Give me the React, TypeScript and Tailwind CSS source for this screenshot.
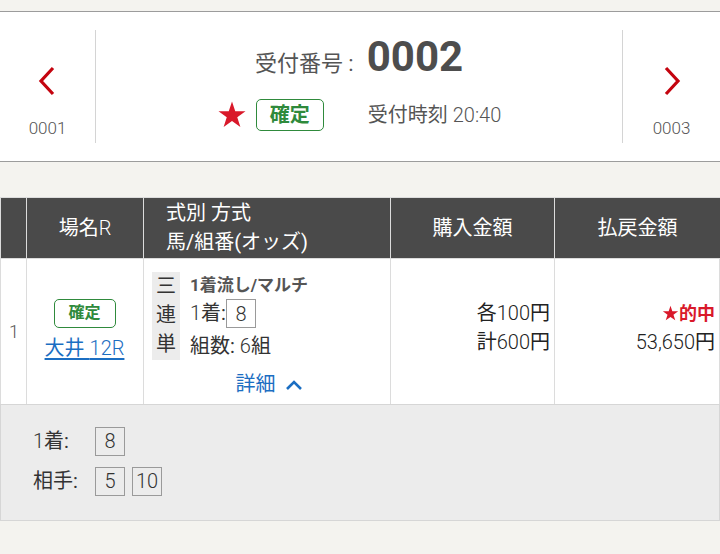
import React from "react";

const font = { fontFamily: 'Roboto, "Noto Sans CJK JP", sans-serif' };

function Chevron({ dir }: { dir: "left" | "right" }) {
  return (
    <svg width="18" height="30" viewBox="0 0 18 30" fill="none">
      {dir === "left" ? (
        <path d="M15 2 L3 15 L15 28" stroke="#c4040f" strokeWidth="3.2" />
      ) : (
        <path d="M3 2 L15 15 L3 28" stroke="#c4040f" strokeWidth="3.2" />
      )}
    </svg>
  );
}

function Star({ size }: { size: number }) {
  return (
    <svg width={size} height={size} viewBox="0 0 24 24">
      <path
        d="M12 1.2 L14.6 8.9 L22.8 8.9 L16.2 13.8 L18.7 21.6 L12 16.8 L5.3 21.6 L7.8 13.8 L1.2 8.9 L9.4 8.9 Z"
        fill="#d9192a"
      />
    </svg>
  );
}

function Box({ children }: { children: React.ReactNode }) {
  return (
    <span className="inline-flex h-[29px] w-[30px] items-center justify-center border border-[#9a9a9a] text-[20px] font-light leading-none text-[#333]">
      {children}
    </span>
  );
}

export default function App() {
  return (
    <div className="min-h-[554px] w-[720px] bg-[#f4f3ef] pt-[11px] font-light" style={font}>
      {/* Header panel */}
      <div className="flex h-[151px] border-y border-[#9c9c9c] bg-white py-[18px]">
        <div className="flex w-[96px] flex-col items-center border-r border-[#d4d4d4] pt-[36px]">
          <div className="ml-[-2px]">
            <Chevron dir="left" />
          </div>
          <div className="mt-[24px] text-[17px] leading-none text-[#555]">0001</div>
        </div>
        <div className="flex flex-1 flex-col items-center">
          <div className="mt-[1px] flex items-baseline text-[#555]">
            <span className="text-[22px] font-normal">受付番号 :</span>
            <span className="ml-[13px] text-[42px] font-bold leading-[52px] text-[#4d4d4d]">0002</span>
          </div>
          <div className="mt-[16px] flex items-center">
            <span>
              <Star size={30} />
            </span>
            <span className="ml-[9px] flex h-[32px] w-[68px] items-center justify-center rounded-[5px] border border-[#2f8a3c] text-[20px] font-bold text-[#2f8a3c]">
              確定
            </span>
            <span className="ml-[44px] text-[20px] font-normal text-[#555]">
              受付時刻 <span className="font-light">20:40</span>
            </span>
          </div>
        </div>
        <div className="flex w-[98px] flex-col items-center border-l border-[#d4d4d4] pt-[36px]">
          <div>
            <Chevron dir="right" />
          </div>
          <div className="mt-[24px] text-[17px] leading-none text-[#555]">0003</div>
        </div>
      </div>

      {/* Table */}
      <div className="mt-[35px] border-t border-[#dcdcdc]">
        <div className="grid grid-cols-[27px_117px_247px_164px_165px]">
          {/* header */}
          <div className="h-[60px] border-l border-r border-[#dcdcdc] bg-[#4a4a4a]" />
          <div className="flex h-[60px] items-center justify-center border-r border-[#dcdcdc] bg-[#4a4a4a] text-[20px] font-normal text-white">
            場名<span className="font-light">R</span>
          </div>
          <div className="flex h-[60px] flex-col justify-center border-r border-[#dcdcdc] bg-[#4a4a4a] pl-[22px] text-[20px] font-normal leading-[29px] text-white">
            <span>式別 方式</span>
            <span>馬/組番(オッズ)</span>
          </div>
          <div className="flex h-[60px] items-center justify-center border-r border-[#dcdcdc] bg-[#4a4a4a] text-[20px] font-normal text-white">
            購入金額
          </div>
          <div className="flex h-[60px] items-center justify-center bg-[#4a4a4a] text-[20px] font-normal text-white">
            払戻金額
          </div>

          {/* body row */}
          <div className="flex h-[146px] items-center border-l border-r border-t border-[#dcdcdc] bg-white pl-[8px] text-[18px] text-[#555]">
            1
          </div>
          <div className="flex h-[146px] flex-col items-center justify-center border-r border-t border-[#dcdcdc] bg-white pb-[4px]">
            <span className="ml-[-1px] flex h-[29px] w-[62px] items-center justify-center rounded-[5px] border border-[#2f8a3c] text-[16px] font-bold text-[#2f8a3c]">
              確定
            </span>
            <a className="ml-[-1px] mt-[7px] text-[20px] font-normal leading-[26px] text-[#1b6ec2] underline underline-offset-[3px]">
              大井 <span className="font-light">12R</span>
            </a>
          </div>
          <div className="flex h-[146px] flex-col border-r border-t border-[#dcdcdc] bg-white pl-[8px] pt-[13px]">
            <div className="flex">
              <div className="flex w-[28px] flex-col items-center bg-[#ececec] text-[20px] font-normal leading-[29px] text-[#333]">
                <span>三</span>
                <span>連</span>
                <span>単</span>
              </div>
              <div className="ml-[10px] flex flex-col text-[#333]">
                <span className="text-[17px] font-bold leading-[26px] text-[#555]">1着流し/マルチ</span>
                <span className="mt-[1px] flex items-center text-[20px] font-normal leading-[29px]">
                  <span className="font-light">1</span>着:<Box>8</Box>
                </span>
                <span className="mt-[4px] text-[20px] font-normal leading-[28px]">
                  組数: <span className="font-light">6</span>組
                </span>
              </div>
            </div>
            <div className="mt-[9px] flex items-center justify-center pr-[4px] text-[20px] font-normal text-[#1b6ec2]">
              <span>詳細</span>
              <svg className="ml-[9px]" width="18" height="11" viewBox="0 0 18 11" fill="none">
                <path d="M2 10 L9 3 L16 10" stroke="#1b6ec2" strokeWidth="2.6" />
              </svg>
            </div>
          </div>
          <div className="flex h-[146px] flex-col items-end justify-start border-r border-t border-[#dcdcdc] bg-white pr-[4px] pt-[40px] text-[20px] font-normal leading-[29px] text-[#222]">
            <span>
              各<span className="font-light">100</span>円
            </span>
            <span>
              計<span className="font-light">600</span>円
            </span>
          </div>
          <div className="flex h-[146px] flex-col items-end border-r border-t border-[#dcdcdc] bg-white pr-[4px] pt-[40px] text-[20px] font-normal leading-[29px] text-[#222]">
            <span className="flex items-center text-[18px] font-bold text-[#d9192a]">
              <Star size={17} />
              的中
            </span>
            <span>
              <span className="font-light">53,650</span>円
            </span>
          </div>
        </div>

        {/* detail row */}
        <div className="h-[117px] border border-[#d6d6d6] bg-[#ececec] pl-[32px] pt-[21px]">
          <div className="flex items-center text-[20px] font-normal text-[#333]">
            <span className="w-[62px]">
              <span className="font-light">1</span>着:
            </span>
            <Box>8</Box>
          </div>
          <div className="mt-[10px] flex items-center text-[20px] font-normal text-[#333]">
            <span className="w-[62px]">相手:</span>
            <Box>5</Box>
            <span className="ml-[7px]">
              <Box>10</Box>
            </span>
          </div>
        </div>
      </div>
    </div>
  );
}
